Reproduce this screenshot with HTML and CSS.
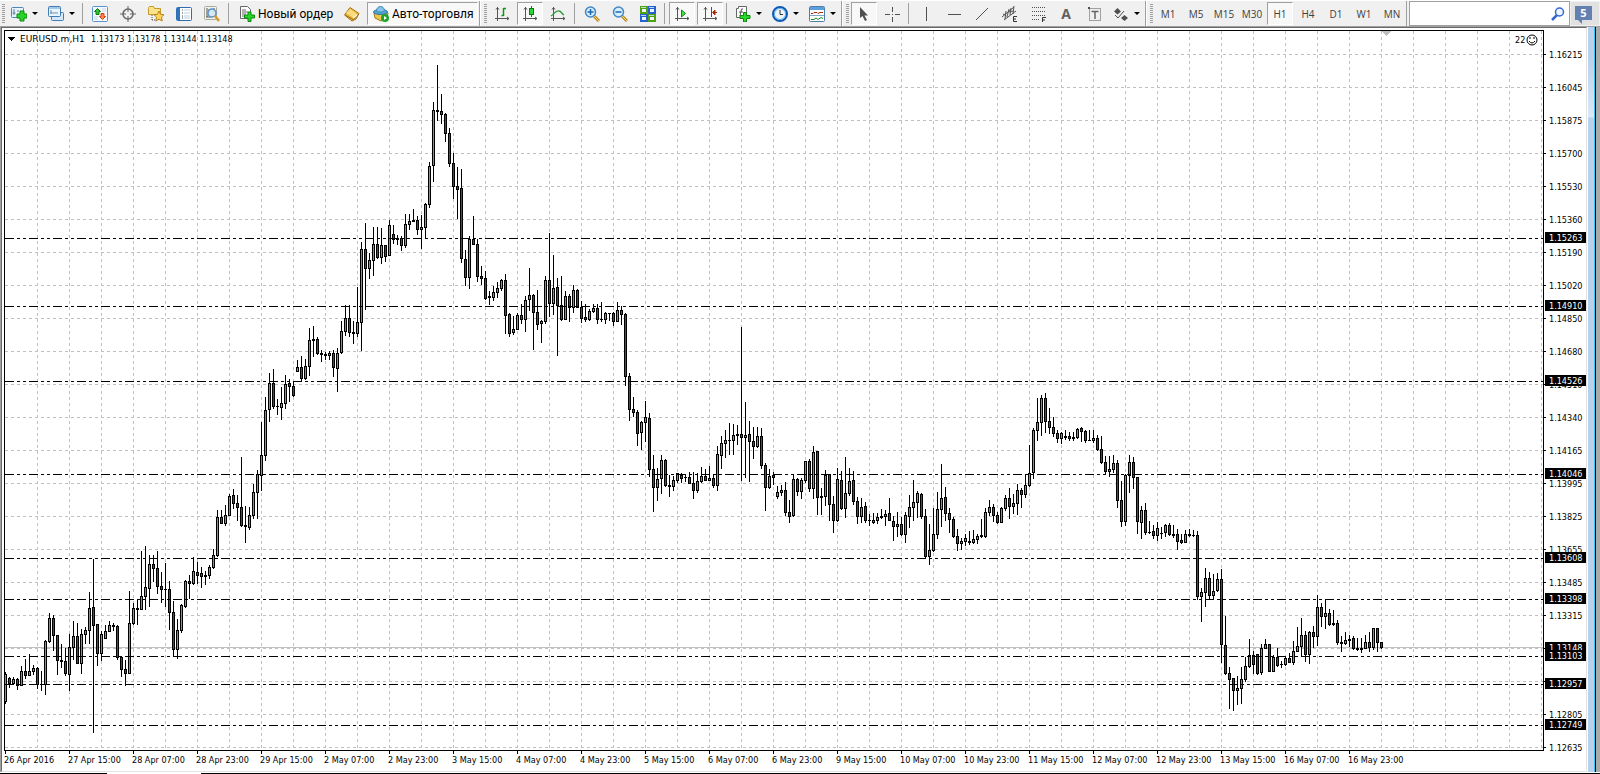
FILE: index.html
```html
<!DOCTYPE html>
<html lang="ru">
<head>
	<meta charset="utf-8">
	<title>EURUSD.m,H1</title>
	<link rel="stylesheet" href="styles.css">
</head>
<body>
	<header class="toolbar">
		<div class="band">
			<span class="grip"></span>
			<button class="tool drop" aria-label="New chart">
				<svg class="icon" viewBox="0 0 16 16"><rect x="0.500" y="1.500" width="12" height="10" rx="1" fill="#e8f2fb" stroke="#4d86b8"/><path d="M3 3v6M1.500 7h3M6 5h2" stroke="#5a7f9c" fill="none"/><path d="M9 5h4v3h3v4h-3v3H9v-3H6V8h3z" fill="#27d427" stroke="#0a8a0a"/></svg>
				<i class="caret"></i>
			</button>
			<button class="tool drop" aria-label="Profiles">
				<svg class="icon" viewBox="0 0 16 16"><rect x="3.500" y="6.500" width="12" height="8" rx="1" fill="#d6e8f7" stroke="#3f7cb4"/><rect x="0.500" y="0.500" width="12" height="10" rx="1" fill="#eaf4fc" stroke="#3f7cb4"/><path d="M1 2h11" stroke="#5a9bd4"/><path d="M3 4v4M2 7h8" stroke="#6d8fae" fill="none"/></svg>
				<i class="caret"></i>
			</button>
			<span class="sep"></span>
			<button class="tool" aria-label="Market watch">
				<svg class="icon" viewBox="0 0 16 16"><rect x="0.500" y="0.500" width="15" height="15" rx="1" fill="#f4f9fd" stroke="#5b95cc"/><path d="M10 3h4M10 5h4M2 11h4M2 13h4" stroke="#c7d7e5"/><path d="M5.500 2.500l3 3H7v3H4v-3H2.500z" fill="#2fc62f" stroke="#0b7c0b"/><path d="M10.500 13.500l-3-3H9v-3h3v3h1.500z" fill="#ff8a4a" stroke="#d0411a"/></svg>
			</button>
			<button class="tool" aria-label="Data window">
				<svg class="icon" viewBox="0 0 16 16"><circle cx="8" cy="8" r="5" fill="none" stroke="#666" stroke-width="1.500"/><path d="M8 0v6M8 10v6M0 8h6M10 8h6" stroke="#666"/></svg>
			</button>
			<button class="tool" aria-label="Navigator">
				<svg class="icon" viewBox="0 0 16 16"><path d="M0.500 2.500v-1l1-1h4l1 2h6v6h-12z" fill="#fbe38c" stroke="#c39a25"/><path d="M4 9v6M4 14h3" stroke="#555" stroke-dasharray="1 1"/><path d="M11 5l1.600 3.300 3.400.4-2.500 2.400.7 3.900L11 13.200 7.800 15l.7-3.900L6 8.700l3.400-.4z" fill="#ffd55a" stroke="#b8801b"/></svg>
			</button>
			<button class="tool" aria-label="Terminal">
				<svg class="icon" viewBox="0 0 16 16"><rect x="0.500" y="1.500" width="15" height="13" rx="1" fill="#fff" stroke="#2f6db0"/><path d="M1 2h3v12H1z" fill="#2f74c0"/><path d="M6 4h1M6 7h1M6 10h1M6 12h1" stroke="#444"/><path d="M8 4h6M8 7h6M8 10h6M8 12h6" stroke="#b7d0e8"/></svg>
			</button>
			<button class="tool" aria-label="Strategy tester">
				<svg class="icon" viewBox="0 0 16 16"><rect x="0.500" y="0.500" width="12" height="13" rx="1" fill="#f2f2ee" stroke="#a9a99c"/><path d="M3 2v9M5 3v3M10 2v4M2 11h5" stroke="#555"/><circle cx="8" cy="7" r="4" fill="#cfe6f8" fill-opacity=".8" stroke="#5b92c4" stroke-width="1.500"/><path d="M11 10l4 5" stroke="#d39a25" stroke-width="2.500"/></svg>
			</button>
			<span class="sep"></span>
			<button class="tool wide order">
				<svg class="icon" viewBox="0 0 16 16"><path d="M1.500 0.500h7l3 3v9h-10z" fill="#fff" stroke="#666"/><path d="M3 4h4M3 6h6M3 8h4M3 10h3" stroke="#666"/><path d="M9 6h3v3h3.500v3H12v3.500H9V12H5.500V9H9z" fill="#2bd62b" stroke="#0a8a0a"/></svg>
				Новый ордер
			</button>
			<button class="tool" aria-label="MetaEditor">
				<svg class="icon" viewBox="0 0 16 16"><path d="M6 1.500l9 6-3 5.500-4 2-7.500-6z" fill="#e9b93f" stroke="#a87412"/><path d="M6 3l7 5-3 4-8-5z" fill="#f9dc80"/><path d="M1 9l8 4.500L15 8" stroke="#9c6c12" fill="none"/><path d="M9 12l4-3" stroke="#fff6d8" stroke-width="1.500"/></svg>
			</button>
			<button class="tool wide on auto">
				<svg class="icon" viewBox="0 0 16 16"><path d="M1 7l7-3 7 3-1 5-6 3-6-3z" fill="#f0c64a" stroke="#a17b1d"/><ellipse cx="7.500" cy="6" rx="7" ry="2.500" fill="#57a5d4" stroke="#2a749e"/><path d="M3.500 5c0-6 8-6 8 0-2 1.500-6 1.500-8 0z" fill="#83c4e8" stroke="#3b88b4"/><circle cx="12" cy="12" r="4" fill="#1fa52c"/><path d="M11 10v4l3-2z" fill="#fff"/></svg>
				Авто-торговля
			</button>
		</div>
		<div class="band">
			<span class="grip"></span>
			<button class="tool" aria-label="Bar chart">
				<svg class="icon" viewBox="0 0 16 16"><path d="M3.500 1v14M1 12.500h14M2 3.500l1.500-2 1.500 2M13 11l2 1.500-2 1.500" stroke="#555" fill="none"/><path d="M9.500 2v8M9.500 2.500H12M7.500 9.500h2" stroke="#0d960d" stroke-width="1.500" fill="none"/></svg>
			</button>
			<button class="tool on" aria-label="Candlesticks">
				<svg class="icon" viewBox="0 0 16 16"><path d="M3.500 1v14M1 12.500h14M2 3.500l1.500-2 1.500 2M13 11l2 1.500-2 1.500" stroke="#555" fill="none"/><path d="M9.500 0v11" stroke="#087c08"/><rect x="7.500" y="2.500" width="4" height="6" fill="#30d43a" stroke="#087c08"/></svg>
			</button>
			<button class="tool" aria-label="Line chart">
				<svg class="icon" viewBox="0 0 16 16"><path d="M3.500 1v14M1 12.500h14M2 3.500l1.500-2 1.500 2M13 11l2 1.500-2 1.500" stroke="#555" fill="none"/><path d="M1 10c3-2 5-6 8-5 2 0 3 3 5 4" stroke="#2a9c36" stroke-width="1.300" fill="none"/></svg>
			</button>
			<span class="sep"></span>
			<button class="tool" aria-label="Zoom in">
				<svg class="icon" viewBox="0 0 16 16"><path d="M10 10l5 5" stroke="#b78318" stroke-width="3"/><path d="M10 10l5 5" stroke="#ffe07a"/><circle cx="6.500" cy="6" r="5" fill="#d6efff" stroke="#4587c4" stroke-width="1.500"/><path d="M3.500 6h6M6.500 3v6" stroke="#1b67b3" stroke-width="1.500"/></svg>
			</button>
			<button class="tool" aria-label="Zoom out">
				<svg class="icon" viewBox="0 0 16 16"><path d="M10 10l5 5" stroke="#b78318" stroke-width="3"/><path d="M10 10l5 5" stroke="#ffe07a"/><circle cx="6.500" cy="6" r="5" fill="#d6efff" stroke="#4587c4" stroke-width="1.500"/><path d="M3.500 6h6" stroke="#1b67b3" stroke-width="1.500"/></svg>
			</button>
			<button class="tool" aria-label="Tile windows">
				<svg class="icon" viewBox="0 0 16 16"><path d="M0 0h8v8H0zM8 8h8v8H8z" fill="#4fa20d"/><path d="M8 0h8v8H8zM0 8h8v8H0z" fill="#2560cf"/><path d="M2 3h4v3H2zM10 3h4v3h-4zM2 11h4v3H2zM10 11h4v3h-4z" fill="#eef5ff"/><path d="M1 1.500h5M9 1.500h5M1 9.500h5M9 9.500h5" stroke="#b5d8f0"/></svg>
			</button>
			<span class="sep"></span>
			<button class="tool on" aria-label="Auto scroll">
				<svg class="icon" viewBox="0 0 16 16"><path d="M3.500 1v14M1 12.500h14M2 3.500l1.500-2 1.500 2M13 11l2 1.500-2 1.500" stroke="#555" fill="none"/><path d="M7.500 4v7l4-3.500z" fill="#45e04c" stroke="#0b8a13"/></svg>
			</button>
			<button class="tool on" aria-label="Chart shift">
				<svg class="icon" viewBox="0 0 16 16"><path d="M3.500 1v14M1 12.500h14M2 3.500l1.500-2 1.500 2M13 11l2 1.500-2 1.500" stroke="#555" fill="none"/><path d="M9.500 1v10" stroke="#1c5b93"/><path d="M15 6.500h-4M13 4l-2.500 2.500L13 9z" stroke="#a3290c" fill="#c8401b"/></svg>
			</button>
			<span class="sep"></span>
			<button class="tool drop" aria-label="Indicators">
				<svg class="icon" viewBox="0 0 16 16"><path d="M1.500 2.500h2v-2h8v11h-10z" fill="#fff" stroke="#666"/><path d="M8 3H6.500L5 10M4 6h4" stroke="#555" fill="none"/><path d="M8.500 6.500h3v3H15v3h-3.500V16h-3v-3.500H5v-3h3.500z" fill="#2bd62b" stroke="#0a8a0a"/></svg>
				<i class="caret"></i>
			</button>
			<button class="tool drop" aria-label="Periods">
				<svg class="icon" viewBox="0 0 16 16"><circle cx="8" cy="8" r="7" fill="#eef6fc" stroke="#1259b4" stroke-width="2"/><circle cx="8" cy="8" r="5.500" fill="none" stroke="#58aef2"/><path d="M8 4v4.500h3" stroke="#333" fill="none"/></svg>
				<i class="caret"></i>
			</button>
			<button class="tool drop" aria-label="Templates">
				<svg class="icon" viewBox="0 0 16 16"><rect x="0.500" y="0.500" width="15" height="15" rx="1" fill="#fff" stroke="#4f7ca8"/><path d="M1 1h14v3H1z" fill="#5aa1dc"/><path d="M1 9.500h14" stroke="#7fa7c8"/><path d="M2 7.500h2l1-1h3l1 1 2-1h3" stroke="#a3290c" fill="none"/><path d="M2 13.500h3l2-1.500 2 1.500 3-2 2 1" stroke="#1c8a26" fill="none"/></svg>
				<i class="caret"></i>
			</button>
		</div>
		<div class="band">
			<span class="grip"></span>
			<button class="tool on" aria-label="Cursor">
				<svg class="icon" viewBox="0 0 16 16"><path d="M4 1v11l2.500-2L9 15l2-1-2.500-4.500H12z" fill="#505050"/></svg>
			</button>
			<button class="tool" aria-label="Crosshair">
				<svg class="icon" viewBox="0 0 16 16"><path d="M8.500 1v5M8.500 11v5M1 8.500h5M11 8.500h5M8 8.500h1" stroke="#505050"/></svg>
			</button>
			<span class="sep"></span>
			<button class="tool" aria-label="Vertical line">
				<svg class="icon" viewBox="0 0 16 16"><path d="M8.500 1v14" stroke="#505050"/></svg>
			</button>
			<button class="tool" aria-label="Horizontal line">
				<svg class="icon" viewBox="0 0 16 16"><path d="M2 8.500h13" stroke="#505050"/></svg>
			</button>
			<button class="tool" aria-label="Trend line">
				<svg class="icon" viewBox="0 0 16 16"><path d="M2 14L14 2" stroke="#505050"/></svg>
			</button>
			<button class="tool" aria-label="Equidistant channel">
				<svg class="icon" viewBox="0 0 16 16"><path d="M0 11L12 1M2 14L14 5M4 5l-1 8M7 3L5 11M9 2L8 9M12 0l-1 8M1 8l3 1M7 6l4-1" stroke="#505050" fill="none"/><path d="M15 10.500h-3.500v5H15M12 13h2" stroke="#333" fill="none"/></svg>
			</button>
			<button class="tool" aria-label="Fibonacci retracement">
				<svg class="icon" viewBox="0 0 16 16"><path d="M2 1.500h13M2 5.500h13M2 9.500h13M2 13.500h8" stroke="#505050" stroke-dasharray="1 1"/><path d="M12.500 16v-4.500H16M12 14h3" stroke="#333" fill="none"/></svg>
			</button>
			<button class="tool glyph" aria-label="Text">A</button>
			<button class="tool" aria-label="Text label">
				<svg class="icon" viewBox="0 0 16 16"><rect x="3.500" y="2.500" width="11" height="12" fill="none" stroke="#505050" stroke-dasharray="1 1"/><path d="M2 1h2v2H2z" fill="#505050"/><path d="M5.500 5.500h7M9 5v8" stroke="#666" stroke-width="1.500" fill="none"/></svg>
			</button>
			<button class="tool drop" aria-label="Arrows">
				<svg class="icon" viewBox="0 0 16 16"><path d="M4.500 2L8 5.500 4.500 8.500 1 5.500zM11.500 9l3.500 3-3.500 3L8 12z" fill="#505050"/><path d="M2 9l3 3 6-7" stroke="#505050" fill="none"/></svg>
				<i class="caret"></i>
			</button>
		</div>
		<div class="band periods">
			<span class="grip"></span>
			<button class="tool">M1</button>
			<button class="tool">M5</button>
			<button class="tool">M15</button>
			<button class="tool">M30</button>
			<button class="tool on">H1</button>
			<button class="tool">H4</button>
			<button class="tool">D1</button>
			<button class="tool">W1</button>
			<button class="tool">MN</button>
		</div>
		<form class="search" onsubmit="return false;">
			<input type="text" class="search-box" aria-label="Search">
			<button class="find" aria-label="Find">
				<svg class="icon" viewBox="0 0 16 16"><path d="M7 9l-5 5" stroke="#3567cf" stroke-width="2.500"/><circle cx="9.500" cy="6" r="4" fill="#eef5ff" stroke="#3567cf" stroke-width="1.500"/></svg>
			</button>
		</form>
		<button class="messages"><span class="bubble">5</span></button>
	</header>

	<main class="workspace">
		<svg id="chart" class="chart"></svg>
		<div class="edge"></div>
	</main>
	<footer class="tabs"><span class="tab"></span></footer>

	<script src="chart.js"></script>
</body>
</html>
```
FILE: styles.css
```css
* {
	box-sizing: border-box;
}

body {
	margin: 0;
	height: 100vh;
	display: flex;
	flex-direction: column;
	overflow: hidden;
	background: #fff;
	font-family: "Open Sans", "Noto Sans", sans-serif;
	font-size: 12px;
	color: #000;
}

/* toolbar */
.toolbar {
	display: flex;
	height: 26px;
	flex: none;
	background: #f0f0f0;
	border-top: 1px solid #fff;
}

.band {
	display: flex;
	align-items: center;
	flex: none;
	padding-left: 2px;
	border-right: 1px solid #a0a0a0;
}

.band + .band {
	padding-left: 3px;
	border-left: 1px solid #fff;
}

.grip {
	width: 3px;
	height: 19px;
	margin-right: 1px;
	background: repeating-linear-gradient(#a0a0a0 0 1px, #f0f0f0 1px 2px);
}

.tool {
	display: flex;
	align-items: center;
	justify-content: center;
	flex: none;
	width: 26px;
	height: 23px;
	margin: 0 1px;
	padding: 0;
	border: 1px solid transparent;
	background: none;
	font: inherit;
	color: inherit;
	white-space: nowrap;
}

.tool.on {
	background: #f8f8f8;
	border-color: #a0a0a0 #fff #fff #a0a0a0;
}

.tool.drop {
	width: 35px;
	gap: 5px;
}

.tool.wide {
	justify-content: flex-start;
	gap: 3px;
	padding-left: 5px;
	font-family: Roboto, sans-serif;
}

.tool.order {
	width: 104px;
}

.tool.auto {
	width: 111px;
}

.tool.glyph {
	font-size: 14px;
	font-weight: bold;
	color: #606060;
}

.periods .tool {
	font-size: 10px;
	color: #404040;
}

.icon {
	display: block;
	flex: none;
	width: 16px;
	height: 16px;
}

.caret {
	border: 3px solid transparent;
	border-top-color: #000;
	border-bottom: 0;
}

.sep {
	width: 1px;
	height: 21px;
	margin: 0 3px 0 2px;
	background: #a0a0a0;
}

.search {
	display: flex;
	flex: 1;
	min-width: 0;
	align-items: center;
	margin-left: 2px;
	border: 1px solid #a0a0a0;
	background: #fff;
}

.search-box {
	flex: 1;
	width: 0;
	min-width: 0;
	height: 22px;
	border: 0;
	outline: 0;
	background: none;
}

.find {
	padding: 0;
	margin-right: 3px;
	border: 0;
	background: none;
}

.messages {
	flex: none;
	width: 30px;
	padding: 0 3px 0 0;
	border: 1px solid #f0f0f0;
	background: #e1e1e1;
}

.bubble {
	display: block;
	position: relative;
	width: 17px;
	height: 14px;
	margin: 0 auto 2px;
	background: #6480b0;
	color: #fff;
	font: bold 11px/14px "Open Sans", sans-serif;
}

.bubble::after {
	content: "";
	position: absolute;
	left: 3px;
	top: 14px;
	border: 4px solid transparent;
	border-top-color: #6480b0;
	border-right: 0;
	border-bottom: 0;
}

/* chart window */
.workspace {
	display: flex;
	flex: 1;
	min-height: 0;
	border-top: 1px solid #a0a0a0;
	border-left: 1px solid #a0a0a0;
}

.chart {
	flex: 1;
	min-width: 0;
	height: 100%;
	border: 1px solid #e3e3e3;
	border-top-color: #696969;
	border-left-color: #696969;
	font-family: "DejaVu Sans Condensed", "DejaVu Sans", sans-serif;
	font-size: 9px;
	shape-rendering: crispEdges;
}

.edge {
	width: 12px;
	margin-left: 1px;
	border-right: 4px solid #ababab;
	background: linear-gradient(90deg, transparent 6px, #35c5ee 6px 7px, #000 7px), linear-gradient(#b9d1ea 30px, #dbe8f5 90px, #b9d1ea 91px);
}

.tabs {
	flex: none;
	height: 2px;
	border-top: 1px solid #fff;
	background: #000;
}

.tab {
	display: block;
	width: 94px;
	height: 1px;
	margin-left: 107px;
	background: #fff;
}

.symbol {
	font-family: "DejaVu Sans", sans-serif;
}

.grid {
	stroke: #c0c0c0;
	stroke-dasharray: 3 3;
}

.frame {
	fill: none;
	stroke: #000;
}

.level {
	stroke: #000;
	stroke-dasharray: 9 3 3 3 3 3;
}

.price-line {
	stroke: #c0c0c0;
}

.wick {
	stroke: #000;
}

.body {
	fill: #000;
}

.up {
	fill: #32cd32;
}

.down {
	fill: #ff0000;
}

.tag {
	fill: #fff;
}

.marker {
	fill: #c0c0c0;
}

.smile {
	fill: none;
	stroke: #000;
	shape-rendering: auto;
}
```
FILE: chart.js
```js
var svg = document.getElementById("chart");
var W = svg.clientWidth;
var H = svg.clientHeight;

var left = 2;
var top0 = 2;
var right = W - 43;
var bottom = H - 21;
var step = 4;
var offset = 28;   // quotes are stored from the top of the terminal window

// high, body top, body bottom, low, direction
var quotes = `
672 674 702 704 g|677 678 684 688 r|677 679 684 685 g|678 679 686 690 r|666 671 686 686 g
659 671 676 679 r|654 671 676 676 g|665 668 672 675 g|667 668 685 689 r|671 684 685 691 r
640 641 685 695 g|613 618 642 643 g|615 618 636 651 r|635 635 661 675 r|644 660 662 668 r
648 661 674 676 r|634 647 675 691 g|621 636 648 660 g|623 636 664 664 r|629 634 664 674 g
627 630 635 644 g|592 608 631 644 g|559 607 626 733 r|624 624 654 666 r|631 634 654 661 g
625 631 639 639 g|621 625 632 632 g|623 625 627 631 r|625 626 658 660 r|657 657 670 677 r
660 669 674 686 r|591 623 674 674 g|603 608 624 625 g|600 608 610 625 r|551 596 610 610 g
546 587 597 610 g|555 564 589 607 g|555 564 569 582 r|551 568 587 594 r|572 586 590 603 r
563 589 590 607 r|581 589 613 630 r|601 612 650 657 r|619 630 650 659 g|604 605 631 633 g
580 581 607 608 g|575 581 584 599 r|557 571 584 585 g|562 572 576 584 r|567 573 577 588 r
571 575 577 585 r|565 567 576 579 g|549 555 568 569 g|510 517 556 557 g|510 517 524 524 r
505 515 524 526 g|494 496 516 516 g|489 495 504 509 r|495 503 508 521 r|457 507 526 527 r
506 525 527 543 r|507 515 528 530 g|484 492 516 519 g|470 474 493 519 g|422 455 476 491 g
397 410 456 461 g|373 383 410 422 g|369 383 407 409 r|399 406 407 415 r|387 403 408 420 g
375 384 404 409 g|379 383 387 402 r|381 386 396 397 r|360 367 372 372 g|356 367 379 382 r
359 366 379 380 g|328 340 367 376 g|326 339 341 357 r|337 339 354 355 r|350 353 355 362 r
352 354 356 360 r|351 353 356 360 g|350 353 368 377 r|348 353 369 392 g|321 331 353 354 g
305 318 332 336 g|305 318 333 337 r|321 332 334 344 r|287 322 334 337 g|242 249 323 351 g
223 249 269 310 r|253 260 269 279 g|227 244 261 276 g|227 244 258 259 r|228 245 258 264 g
245 245 257 262 r|220 225 256 256 g|225 234 240 244 r|235 238 240 245 r|236 238 246 251 r
214 224 246 248 g|214 221 225 230 g|209 220 222 222 r|216 220 230 235 r|215 227 230 249 g
203 204 228 239 g|162 166 205 208 g|102 110 166 182 g|65 110 112 121 r|94 111 115 124 r
113 114 134 142 r|128 133 164 167 r|153 163 187 199 r|167 186 190 219 r|169 188 259 263 r
250 259 278 286 r|236 239 278 289 g|216 239 245 245 r|239 244 277 282 r|266 276 279 285 r
271 278 299 300 r|291 296 298 305 r|286 292 298 301 g|282 288 293 298 g|279 280 289 291 g
274 280 316 334 r|313 314 334 337 r|316 329 333 335 g|313 315 330 330 g|304 315 320 324 r
296 300 320 332 g|268 295 300 311 g|294 295 313 350 r|290 312 325 330 r|320 321 324 343 g
276 280 322 324 g|233 280 304 317 r|255 288 304 315 g|278 287 306 356 r|276 305 320 321 r
291 296 320 320 g|294 296 308 322 r|285 290 308 313 g|289 290 308 308 r|301 307 319 323 r
304 317 320 322 r|309 311 320 321 g|304 308 312 313 g|304 308 320 324 r|302 319 320 322 r
312 313 320 324 g|313 313 314 321 r|312 313 322 326 r|302 310 322 322 g|306 310 315 325 r
313 314 377 386 r|373 376 410 421 r|397 409 413 417 r|410 412 434 446 r|421 422 433 450 g
401 417 423 442 g|413 418 470 477 r|455 469 488 512 r|468 479 488 501 g|455 460 479 494 g
459 460 486 487 r|475 485 487 497 r|476 480 487 491 g|473 473 481 483 g|473 475 479 483 r
474 477 478 482 r|472 477 484 484 r|472 483 491 499 r|473 481 491 493 g|467 476 482 483 g
469 476 481 481 r|466 478 481 481 g|474 478 486 488 r|446 454 486 491 g|436 443 456 469 g
430 440 444 458 g|423 440 441 455 r|424 435 441 455 g|425 434 436 445 r|327 434 438 481 r
402 435 438 478 g|421 434 442 482 r|427 441 447 459 r|427 436 447 448 g|428 436 466 469 r
463 465 488 511 r|469 476 488 489 g|472 475 478 485 r|486 492 497 499 g|485 490 493 496 g
482 490 513 516 r|500 512 517 523 r|474 479 516 517 g|478 479 492 496 r|478 480 492 499 g
461 461 481 483 g|459 461 489 492 r|446 452 489 499 g|451 451 498 515 r|488 496 498 515 r
470 475 497 506 g|474 474 505 521 r|496 504 521 533 r|468 479 521 522 g|471 480 509 510 r
457 493 509 518 g|468 481 494 496 g|471 480 502 505 r|497 501 517 524 r|498 507 517 523 g
502 506 521 523 r|514 520 521 526 r|513 520 523 524 g|513 517 521 524 g|509 516 518 519 r
510 514 517 526 g|498 513 521 521 r|516 521 527 541 r|512 524 527 537 g|517 524 535 536 r
512 515 535 543 g|495 507 517 528 g|480 502 508 521 g|491 493 503 518 g|493 494 517 519 r
509 516 557 559 r|524 550 557 565 g|508 534 551 552 g|492 509 535 539 g|464 498 510 527 g
487 497 514 521 r|508 513 520 533 r|517 519 537 538 r|529 536 544 551 r|538 541 544 550 g
534 538 542 546 g|531 541 543 545 r|530 539 543 544 g|534 536 540 544 g|519 535 537 538 r
508 512 537 538 g|500 507 513 516 g|504 507 516 522 r|512 515 523 524 r|507 508 523 523 g
495 498 509 511 g|488 498 507 519 r|494 503 507 514 g|484 490 504 515 g|488 490 495 508 r
474 485 495 498 g|445 473 486 487 g|428 430 473 479 g|398 422 431 441 g|395 398 423 436 g
393 398 422 433 r|408 421 428 434 r|417 427 434 437 r|430 433 439 443 r|432 433 439 444 g
430 436 438 440 r|432 436 439 441 r|432 437 439 441 r|428 429 438 439 g|427 428 432 442 r
430 431 441 443 r|430 440 441 441 r|430 438 441 443 g|435 438 450 451 r|436 449 463 464 r
456 462 472 474 r|456 469 472 477 g|455 463 470 473 g|460 463 501 508 r|481 500 522 527 r
474 475 522 526 g|455 462 476 493 g|457 462 478 489 r|477 477 522 534 r|506 510 523 539 g
503 510 533 535 r|521 532 533 534 r|525 531 536 539 r|522 528 536 541 g|527 533 534 539 r
524 525 533 537 g|523 525 535 536 r|525 534 536 538 r|529 534 542 550 r|534 540 543 544 r
530 534 543 543 g|529 534 536 537 r|530 535 536 537 r|531 535 597 600 r|588 592 597 622 g
568 578 593 607 g|572 578 596 599 r|574 591 596 599 g|573 579 591 592 g|569 579 645 663 r
616 645 674 675 r|667 673 680 709 r|678 678 691 711 r|676 688 691 705 g|667 679 689 704 g
657 666 680 682 g|639 655 667 668 g|651 655 665 674 r|654 654 674 675 r|644 648 673 675 g
639 644 649 649 g|644 644 672 672 r|655 657 672 672 g|648 657 666 667 r|661 664 665 668 r
656 658 665 666 g|653 658 663 663 r|641 651 663 665 g|627 646 652 652 g|618 635 647 657 g
631 635 655 662 r|631 632 655 664 g|626 632 637 648 r|595 607 637 646 g|603 607 617 627 r
599 613 617 629 g|609 613 625 626 r|610 623 625 626 r|620 623 643 645 r|636 642 644 652 r
632 640 644 645 g|635 639 641 647 r|636 638 649 650 r|638 648 650 651 r|638 648 650 653 r
635 642 649 649 g|632 642 648 652 r|628 628 648 650 g|628 628 643 652 r|642 642 648 649 r`;

var prices = ["1.16215", "1.16045", "1.15875", "1.15700", "1.15530", "1.15360", "1.15190", "1.15020",
	"1.14850", "1.14680", "1.14510", "1.14340", "1.14165", "1.13995", "1.13825", "1.13655", "1.13485",
	"1.13315", "1.13145", "1.12975", "1.12805", "1.12635"];

var times = ["26 Apr 2016", "27 Apr 15:00", "28 Apr 07:00", "28 Apr 23:00", "29 Apr 15:00", "2 May 07:00",
	"2 May 23:00", "3 May 15:00", "4 May 07:00", "4 May 23:00", "5 May 15:00", "6 May 07:00", "6 May 23:00",
	"9 May 15:00", "10 May 07:00", "10 May 23:00", "11 May 15:00", "12 May 07:00", "12 May 23:00",
	"13 May 15:00", "16 May 07:00", "16 May 23:00"];

var levels = [[238, "1.15263"], [306, "1.14910"], [381, "1.14526"], [474, "1.14046"], [558, "1.13608"],
	[599, "1.13398"], [656, "1.13103"], [684, "1.12957"], [725, "1.12749"]];

function add(name, attrs, text) {
	var el = document.createElementNS("http://www.w3.org/2000/svg", name);
	for (var key in attrs) {
		el.setAttribute(key, attrs[key]);
	}
	if (text) {
		el.textContent = text;
	}
	svg.appendChild(el);
}

function hline(y, x1, x2, cls) {
	add("line", { x1: x1, x2: x2, y1: y + 0.5, y2: y + 0.5, "class": cls });
}

function vline(x, y1, y2, cls) {
	add("line", { x1: x + 0.5, x2: x + 0.5, y1: y1, y2: y2, "class": cls });
}

function box(x, y, w, h, cls) {
	add("rect", { x: x, y: y, width: w, height: h, "class": cls });
}

function tag(y, label) {
	box(right + 2, y - 6, 41, 11, "body");
	add("text", { x: right + 6, y: y + 3, "class": "tag" }, label);
}

// grid
for (var x = left + 33; x < right; x += 32) {
	vline(x, top0 + 1, bottom, "grid");
}
prices.forEach(function (p, i) {
	var y = 26 + i * 33;
	hline(y, left + 1, right, "grid");
	hline(y, right, right + 3, "frame");
	if (p != "1.13145" && p != "1.12975") {
		add("text", { x: right + 6, y: y + 4 }, p);
	}
});

hline(647 - offset, left, right, "price-line");

// candles
quotes.trim().split(/[|\n]/).forEach(function (q, i) {
	var c = q.split(" ");
	var cx = left + 1 + i * step;
	var y = c[1] - offset;
	var h = c[2] - c[1];
	vline(cx, c[0] - offset, c[3] - offset, "wick");
	box(cx - 1, y, 3, h, "body");
	if (h > 2) {
		box(cx, y + 1, 1, h - 2, c[4] == "g" ? "up" : "down");
	}
});

levels.forEach(function (l) {
	hline(l[0] - offset, left + 1, right, "level");
});

// frame, axes
box(left + 0.5, top0 + 0.5, right - left, bottom - top0, "frame");
times.forEach(function (t, i) {
	vline(left + 1 + i * 64, bottom, bottom + 4, "frame");
	add("text", { x: left + i * 64, y: bottom + 13 }, t);
});
tag(648 - offset, "1.13148");
levels.forEach(function (l) {
	tag(l[0] - offset, l[1]);
});

// caption
add("path", { d: "M6 9h7l-3.5 4z", "class": "body" });
add("text", { x: 18, y: 14, "class": "symbol" }, "EURUSD.m,H1");
add("text", { x: 89, y: 14 }, "1.13173 1.13178 1.13144 1.13148");
add("path", { d: "M" + (right - 161) + " 3h9l-4.5 5z", "class": "marker" });
add("text", { x: right - 28, y: 15 }, "22");
add("circle", { cx: right - 11, cy: 12, r: 5, "class": "smile" });
add("path", { d: "M" + (right - 14) + " 13q3 4 6 0M" + (right - 13) + " 9v2M" + (right - 9) + " 9v2", "class": "smile" });
```
